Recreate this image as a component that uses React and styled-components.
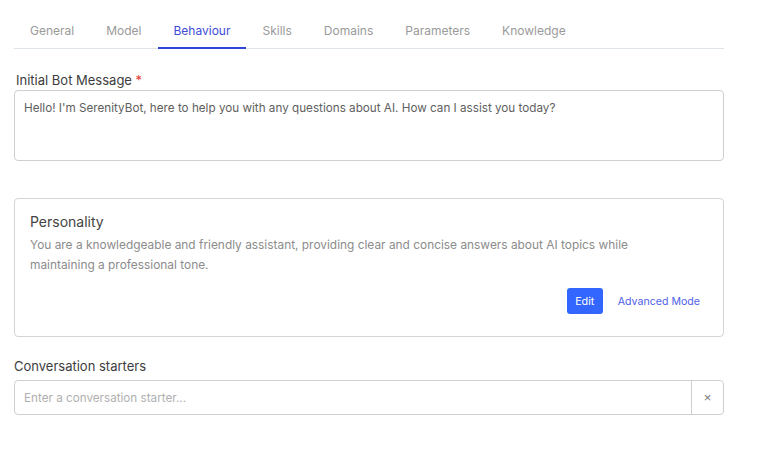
import React, { useState } from 'react';
import styled, { createGlobalStyle } from 'styled-components';

const GlobalStyle = createGlobalStyle`
  body {
    margin: 0;
    background: #fff;
    font-family: Inter, "Noto Sans", sans-serif;
  }
`;

const Page = styled.div`
  width: 710px;
  padding: 14px 0 0 14px;
`;

const Tabs = styled.div`
  display: flex;
  border-bottom: 1px solid #dfe3ea;
`;

const Tab = styled.button`
  background: none;
  border: none;
  font-family: inherit;
  font-size: 12px;
  padding: 9px 16px 9px;
  margin-bottom: -1px;
  cursor: pointer;
  color: ${(p) => (p.active ? '#3d4bd6' : '#9a9a9a')};
  border-bottom: 2px solid ${(p) => (p.active ? '#2f45d9' : 'transparent')};
`;

const Field = styled.div`
  margin-top: ${(p) => p.top || 0}px;
`;

const Label = styled.label`
  display: block;
  font-size: 13px;
  color: #3d3d3d;
  margin: 0 0 ${(p) => p.gap || 4}px ${(p) => p.indent || 0}px;
`;

const Required = styled.span`
  color: #e53935;
`;

const TextArea = styled.textarea`
  display: block;
  box-sizing: border-box;
  width: 100%;
  height: 71px;
  resize: none;
  border: 1px solid #cfcfcf;
  border-radius: 4px;
  padding: 10px 9px;
  font-family: inherit;
  font-size: 11.7px;
  color: #606060;
  outline: none;
`;

const Card = styled.div`
  margin-top: 37px;
  box-sizing: border-box;
  height: 139px;
  border: 1px solid #d4d4d4;
  border-radius: 4px;
  padding: 14px 15px;
  display: flex;
  flex-direction: column;
`;

const CardTitle = styled.h3`
  margin: 0 0 5px;
  font-size: 14px;
  font-weight: 400;
  color: #444;
`;

const CardText = styled.p`
  margin: 0;
  max-width: 620px;
  font-size: 11.9px;
  line-height: 20px;
  color: #8c8c8c;
`;

const Actions = styled.div`
  display: flex;
  justify-content: flex-end;
  align-items: center;
  gap: 15px;
  margin-top: 13px;
  padding-right: 8px;
`;

const EditButton = styled.button`
  background: #3366ff;
  color: #fff;
  border: none;
  border-radius: 3px;
  font-family: inherit;
  font-size: 10.8px;
  height: 26px;
  width: 36px;
  padding: 0;
  cursor: pointer;
`;

const LinkButton = styled.button`
  background: none;
  border: none;
  padding: 0;
  font-family: inherit;
  font-size: 10.6px;
  color: #4f5ee8;
  cursor: pointer;
`;

const InputGroup = styled.div`
  display: flex;
  height: 35px;
  border: 1px solid #cfcfcf;
  border-radius: 4px;
  box-sizing: border-box;
`;

const Input = styled.input`
  flex: 1;
  border: none;
  outline: none;
  padding: 0 9px;
  font-family: inherit;
  font-size: 11.7px;
  color: #555;
  background: transparent;
  &::placeholder {
    color: #b0b0b0;
  }
`;

const ClearButton = styled.button`
  width: 32px;
  border: none;
  border-left: 1px solid #cfcfcf;
  background: none;
  color: #777;
  font-size: 13px;
  cursor: pointer;
  padding: 0;
`;

const tabs = ['General', 'Model', 'Behaviour', 'Skills', 'Domains', 'Parameters', 'Knowledge'];

const App = () => {
  const [active, setActive] = useState('Behaviour');
  const [message, setMessage] = useState(
    "Hello! I'm SerenityBot, here to help you with any questions about AI. How can I assist you today?"
  );
  const [starter, setStarter] = useState('');

  return (
    <Page>
      <GlobalStyle />
      <Tabs>
        {tabs.map((t) => (
          <Tab key={t} active={t === active} onClick={() => setActive(t)}>
            {t}
          </Tab>
        ))}
      </Tabs>

      <Field top={23}>
        <Label indent={2} gap={2}>
          Initial Bot Message <Required>*</Required>
        </Label>
        <TextArea value={message} onChange={(e) => setMessage(e.target.value)} />
      </Field>

      <Card>
        <CardTitle>Personality</CardTitle>
        <CardText>
          You are a knowledgeable and friendly assistant, providing clear and concise answers about AI topics while
          maintaining a professional tone.
        </CardText>
        <Actions>
          <EditButton>Edit</EditButton>
          <LinkButton>Advanced Mode</LinkButton>
        </Actions>
      </Card>

      <Field top={21}>
        <Label gap={6}>Conversation starters</Label>
        <InputGroup>
          <Input
            placeholder="Enter a conversation starter..."
            value={starter}
            onChange={(e) => setStarter(e.target.value)}
          />
          <ClearButton onClick={() => setStarter('')}>×</ClearButton>
        </InputGroup>
      </Field>
    </Page>
  );
};

export default App;
